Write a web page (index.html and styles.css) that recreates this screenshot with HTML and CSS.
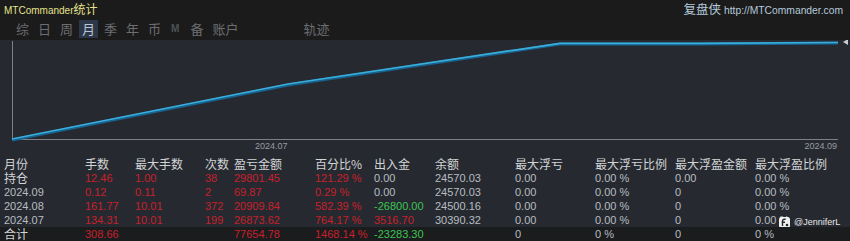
FILE: index.html
```html
<!DOCTYPE html>
<html lang="zh">
<head>
  <meta charset="UTF-8">
  <title>MTCommander统计</title>
  <link rel="stylesheet" href="styles.css">
</head>
<body>
  <div class="topbar">
    <div class="titlerow">
      <div class="title">MTCommander<span class="cjk">统计</span></div>
      <div class="site"><span class="cjk">复盘侠</span> http://MTCommander.com</div>
    </div>
    <div class="tabs">
      <span class="tab">综</span>
      <span class="tab">日</span>
      <span class="tab">周</span>
      <span class="tab active">月</span>
      <span class="tab">季</span>
      <span class="tab">年</span>
      <span class="tab">币</span>
      <span class="tab tab-m">M</span>
      <span class="tab">备</span>
      <span class="tab">账户</span>
      <span class="tab tab-track">轨迹</span>
    </div>
  </div>

  <div class="chart">
    <svg width="850" height="117" viewBox="0 0 850 117">
      <line x1="12.5" y1="1" x2="12.5" y2="99" stroke="#7d8187" stroke-width="1"/>
      <line x1="12" y1="99.5" x2="838" y2="99.5" stroke="#7d8187" stroke-width="1"/>
      <polyline points="12,100 288,45 560,4 700,4 838,3" fill="none" stroke="#17628f" stroke-width="3"/>
      <polyline points="12,99 288,44 560,3.3 700,3.3 838,2.5" fill="none" stroke="#3aaedb" stroke-width="1.7"/>
      <polygon points="843,2 848,-1 848,5" fill="#c8ccd0"/>
      <text x="255" y="109" class="axis-label">2024.07</text>
      <text x="837" y="109" class="axis-label" text-anchor="end">2024.09</text>
    </svg>
  </div>

  <div class="table">
    <div class="row head">
      <span>月份</span><span>手数</span><span>最大手数</span><span>次数</span><span>盈亏金额</span><span>百分比%</span><span>出入金</span><span>余额</span><span>最大浮亏</span><span>最大浮亏比例</span><span>最大浮盈金额</span><span>最大浮盈比例</span>
    </div>
    <div class="row">
      <span class="cjk-cell">持仓</span><span class="red">12.46</span><span class="red">1.00</span><span class="red">38</span><span class="red">29801.45</span><span class="red">121.29 %</span><span>0.00</span><span>24570.03</span><span>0.00</span><span>0.00 %</span><span>0.00</span><span>0.00 %</span>
    </div>
    <div class="row">
      <span>2024.09</span><span class="red">0.12</span><span class="red">0.11</span><span class="red">2</span><span class="red">69.87</span><span class="red">0.29 %</span><span>0.00</span><span>24570.03</span><span>0.00</span><span>0.00 %</span><span>0</span><span>0.00 %</span>
    </div>
    <div class="row">
      <span>2024.08</span><span class="red">161.77</span><span class="red">10.01</span><span class="red">372</span><span class="red">20909.84</span><span class="red">582.39 %</span><span class="green">-26800.00</span><span>24500.16</span><span>0.00</span><span>0.00 %</span><span>0</span><span>0.00 %</span>
    </div>
    <div class="row">
      <span>2024.07</span><span class="red">134.31</span><span class="red">10.01</span><span class="red">199</span><span class="red">26873.62</span><span class="red">764.17 %</span><span class="red">3516.70</span><span>30390.32</span><span>0.00</span><span>0.00 %</span><span>0</span><span>0.00 %</span>
      <div class="watermark">
        <svg width="11" height="11" viewBox="0 0 11 11"><rect x="0" y="0" width="11" height="11" rx="2.5" fill="#f0f0f0"/><path d="M3.5 9V4.2c0-1.3.8-2 2-2h1.2M2.6 5.3h3.4" fill="none" stroke="#26292e" stroke-width="1.4"/><circle cx="8" cy="8" r="1.3" fill="#26292e"/></svg>
        <span>@JenniferL</span>
      </div>
    </div>
    <div class="row total">
      <span class="cjk-cell">合计</span><span class="red">308.66</span><span></span><span></span><span class="red">77654.78</span><span class="red">1468.14 %</span><span class="green">-23283.30</span><span></span><span>0</span><span>0 %</span><span>0</span><span>0 %</span>
    </div>
  </div>
</body>
</html>
```

FILE: styles.css
```css
body { margin: 0; width: 850px; height: 241px; overflow: hidden; background: #262a30; font-family: "Liberation Sans", "Noto Sans CJK SC", sans-serif; color: #b8bcc0; }
.cjk { font-family: "Noto Sans CJK SC", sans-serif; font-size: 12px; }

.topbar { height: 40px; background: #1b1b1c; }
.titlerow { display: flex; justify-content: space-between; align-items: center; height: 20px; padding: 0 7px 0 4px; }
.title { color: #e4e28a; font-size: 10px; line-height: 20px; }
.title .cjk { color: #e4e28a; }
.site { color: #b4cadb; font-size: 10.3px; line-height: 20px; }
.site .cjk { font-size: 12.5px; }

.tabs { display: flex; align-items: center; height: 18px; padding-left: 13px; font-family: "Noto Sans CJK SC", sans-serif; font-size: 13px; color: #6c6e70; }
.tab { display: inline-block; height: 18px; line-height: 18px; padding: 0 3px; margin-right: 3px; }
.tab.active { background: #2c3849; color: #bcc6d4; }
.tab-m { font-family: "Liberation Sans", sans-serif; font-size: 10px; font-weight: bold; color: #4f5254; padding: 0 5px 0 4px; }
.tab-track { margin-left: 56px; }

.chart { height: 117px; }
.chart svg { display: block; }
.axis-label { font-family: "Liberation Sans", sans-serif; font-size: 9px; fill: #989ca0; }

.table { position: relative; }
.row { position: relative; display: grid; grid-template-columns: 81px 50px 70px 29px 81px 59px 61px 80px 80px 80px 80px 1fr; height: 14px; line-height: 14px; padding-left: 4px; font-size: 11px; white-space: nowrap; }
.row.head { font-family: "Noto Sans CJK SC", sans-serif; font-size: 12px; color: #d2d4d6; }
.row.head span, .cjk-cell { line-height: 14px; overflow: visible; }
.cjk-cell { font-family: "Noto Sans CJK SC", sans-serif; font-size: 12px; color: #d2d4d6; }
.row.total { background: #1b1c1d; }
.red { color: #c8202c; }
.green { color: #3cc452; }

.watermark { position: absolute; left: 779px; top: 2px; display: flex; align-items: center; gap: 4px; font-size: 9px; color: #e6e6e6; }
.watermark svg { display: block; }
```
